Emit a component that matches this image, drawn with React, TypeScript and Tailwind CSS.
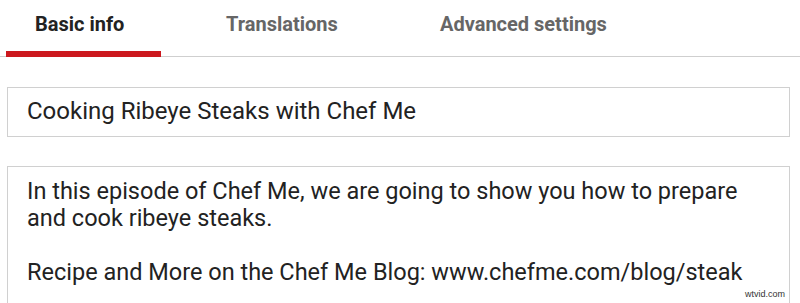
import React from "react";

export default function App() {
  return (
    <div
      className="relative h-[303px] w-[800px] overflow-hidden bg-white text-[#222]"
      style={{ fontFamily: "Roboto, 'Liberation Sans', sans-serif" }}
    >
      <div className="flex h-[57px] items-stretch border-b border-[#cfcfcf] pl-[6px]">
        <div className="-mb-px w-[155px] border-b-[6px] border-[#cc181e] pl-[29px] pt-[12px]">
          <span className="text-[20px] leading-[24px] font-bold text-[#222]">Basic info</span>
        </div>
        <div className="w-[214px] pl-[65px] pt-[12px]">
          <span className="text-[20px] leading-[24px] font-bold text-[#666]">Translations</span>
        </div>
        <div className="pl-[65px] pt-[12px]">
          <span className="text-[20px] leading-[24px] font-bold text-[#666]">Advanced settings</span>
        </div>
      </div>

      <div className="ml-[7px] mr-[10px] mt-[30px] h-[50px] border border-[#d0d0d0] pl-[19px] pt-[9px]">
        <div className="text-[24px] leading-[28px] text-[#222]">Cooking Ribeye Steaks with Chef Me</div>
      </div>

      <div className="ml-[7px] mr-[10px] mt-[29px] h-[160px] border border-[#d0d0d0] pl-[19px] pt-[11px] text-[23.5px] leading-[27px] text-[#222]">
        <div>In this episode of Chef Me, we are going to show you how to prepare</div>
        <div>and cook ribeye steaks.</div>
        <div className="h-[27px]" />
        <div>Recipe and More on the Chef Me Blog: www.chefme.com/blog/steak</div>
      </div>

      <div
        className="absolute left-[745px] top-[289px] text-[9px] leading-[10px] text-[#333]"
        style={{ fontFamily: "'Liberation Sans', sans-serif" }}
      >
        wtvid.com
      </div>
    </div>
  );
}
